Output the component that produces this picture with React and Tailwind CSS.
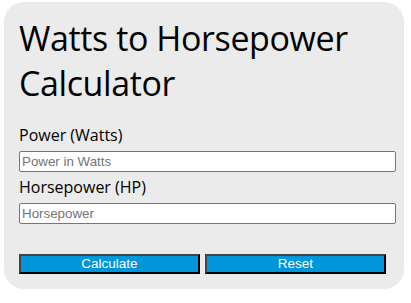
import React from "react";

function Field({ label, placeholder }) {
  return (
    <div>
      <label className="block text-[16px] leading-[22px] text-black">{label}</label>
      <input
        type="text"
        placeholder={placeholder}
        className="mt-[5px] block w-full h-[21px] border border-[#767676] rounded-[2px] bg-white px-[2px] text-[13.33px] font-['Liberation_Sans',Arial,sans-serif] text-black placeholder:text-[#757575] outline-none"
      />
    </div>
  );
}

export default function App() {
  return (
    <div className="w-[411px] h-[303px] bg-white pt-[2px] pl-[4px] font-['Open_Sans','Noto_Sans',sans-serif]">
      <div className="w-[400px] h-[287px] bg-[#ebebeb] rounded-[20px] pl-[15px] pr-[8px] pt-[14px]">
        <h1 className="text-[34px] leading-[45px] text-black font-normal tracking-[-0.4px]">
          Watts to Horsepower Calculator
        </h1>

        <div className="mt-[18px] space-y-[4px]">
          <Field label="Power (Watts)" placeholder="Power in Watts" />
          <Field label="Horsepower (HP)" placeholder="Horsepower" />
        </div>

        <div className="mt-[30px] flex gap-[5px] font-['Liberation_Sans',Arial,sans-serif]">
          <button className="w-[48%] h-[20px] bg-[#0096db] text-white text-[13.5px] leading-none border-2 border-t-[#444] border-l-[#444] border-b-black border-r-black">
            Calculate
          </button>
          <button className="w-[48%] h-[20px] bg-[#0096db] text-white text-[13.5px] leading-none border-2 border-t-[#444] border-l-[#444] border-b-black border-r-black">
            Reset
          </button>
        </div>
      </div>
    </div>
  );
}
